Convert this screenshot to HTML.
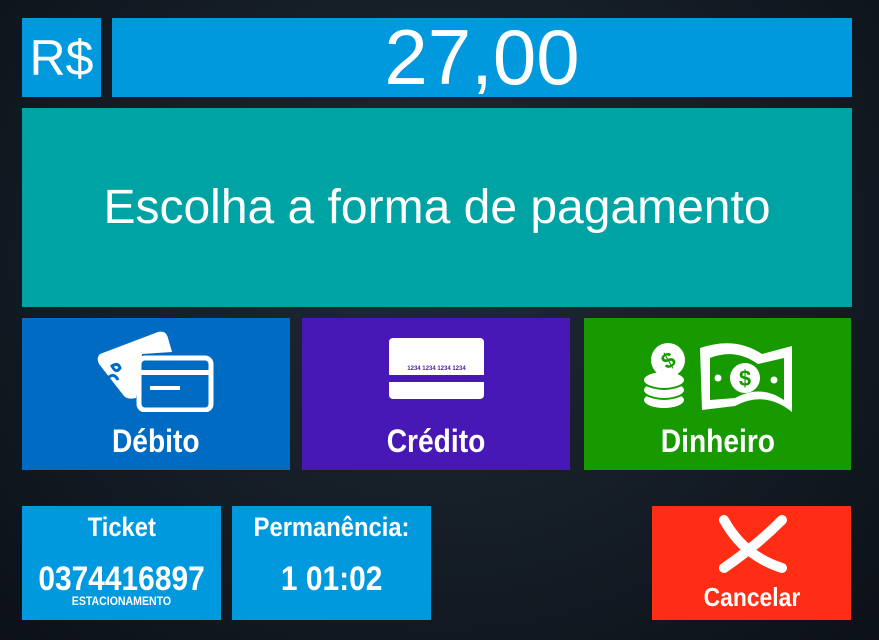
<!DOCTYPE html>
<html><head><meta charset="utf-8"><style>
body{margin:0;width:879px;height:640px;overflow:hidden;background:radial-gradient(ellipse at 50% 40%,#1f2a36 0%,#141b24 60%,#0c1118 100%);font-family:"Liberation Sans",sans-serif;color:#fff;position:relative}
.b{position:absolute;display:flex;align-items:center;justify-content:center}
.n{font-weight:bold}
.c{display:inline-block;transform:scaleX(0.88)}
</style></head><body>
<div class="b" style="left:22px;top:18px;width:79px;height:79px;background:#0099dd;font-size:50px">R$</div>
<div class="b" style="left:112px;top:18px;width:740px;height:79px;background:#0099dd;font-size:78px;line-height:79px">27,00</div>
<div class="b" style="left:22px;top:108px;width:830px;height:199px;background:#00a3a3;font-size:48px">Escolha a forma de pagamento</div>

<div class="b" style="left:22px;top:318px;width:268px;height:152px;background:#006bc2"></div>
<svg style="position:absolute;left:96px;top:326px" width="120" height="86" viewBox="0 0 120 86">
<path d="M4 28 L62 6 Q70 4 72 12 L76 26 L46 28 L40 72 Q32 74 28 70 L3 38 Q0 32 4 28Z" fill="#fff"/>
<path d="M16 40 q6-4 8 2 q-4 6 -8 -2z M12 52 q6 -6 10 2" stroke="#006bc2" stroke-width="3" fill="none"/>
<rect x="43" y="32" width="72" height="52" rx="6" fill="#006bc2" stroke="#fff" stroke-width="5"/>
<rect x="44" y="44" width="70" height="5" fill="#fff"/><rect x="54" y="60" width="30" height="4" fill="#fff"/>
</svg>
<div class="b n" style="left:22px;top:420px;width:268px;height:42px;font-size:32px"><span class="c">Débito</span></div>

<div class="b" style="left:302px;top:318px;width:268px;height:152px;background:#4718b5"></div>
<div style="position:absolute;left:389px;top:338px;width:95px;height:37px;background:#fff;border-radius:4px 4px 0 0;font:bold 6px 'Liberation Sans',sans-serif;color:#4718b5;text-align:center;padding-top:28px;box-sizing:border-box">1234 1234 1234 1234</div>
<div style="position:absolute;left:389px;top:382px;width:95px;height:17px;background:#fff;border-radius:0 0 4px 4px"></div>
<div class="b n" style="left:302px;top:420px;width:268px;height:42px;font-size:32px"><span class="c">Crédito</span></div>

<div class="b" style="left:584px;top:318px;width:267px;height:152px;background:#169a00"></div>
<svg style="position:absolute;left:640px;top:340px" width="156" height="74" viewBox="0 0 156 74">
<g fill="#fff"><ellipse cx="24" cy="60" rx="20" ry="8"/><ellipse cx="24" cy="50" rx="20" ry="8"/><ellipse cx="24" cy="40" rx="20" ry="8"/></g>
<g fill="none" stroke="#169a00" stroke-width="2"><path d="M4 44 q20 10 40 0 M4 54 q20 10 40 0"/></g>
<circle cx="28" cy="20" r="17" fill="#fff"/><text x="28" y="28" fill="#169a00" font-family="Liberation Sans" font-weight="bold" font-size="22" text-anchor="middle" transform="rotate(-30 28 20)">$</text>
<path d="M60 8 Q95 -4 122 14 L152 6 L152 72 Q125 50 95 66 L62 70Z" fill="#fff"/>
<path d="M70 18 Q95 8 118 24 L144 18 L144 60 Q120 44 95 58 L70 60Z" fill="#169a00"/>
<circle cx="105" cy="38" r="15" fill="#fff"/><text x="105" y="46" fill="#169a00" font-family="Liberation Sans" font-weight="bold" font-size="22" text-anchor="middle">$</text>
<circle cx="78" cy="38" r="3.5" fill="#fff"/><circle cx="134" cy="40" r="3.5" fill="#fff"/>
</svg>
<div class="b n" style="left:584px;top:420px;width:267px;height:42px;font-size:32px"><span class="c">Dinheiro</span></div>

<div style="position:absolute;left:22px;top:506px;width:199px;height:114px;background:#0099dd;text-align:center" class="n">
<div style="font-size:27px;margin-top:6px"><span class="c">Ticket</span></div>
<div style="font-size:34px;margin-top:18px;white-space:nowrap;line-height:36px"><span class="c">0374416897</span></div>
<div style="font-size:12px;margin-top:-3px"><span class="c">ESTACIONAMENTO</span></div></div>
<div style="position:absolute;left:232px;top:506px;width:199px;height:114px;background:#0099dd;text-align:center;white-space:nowrap" class="n">
<div style="font-size:27px;margin-top:6px"><span class="c">Permanência:</span></div>
<div style="font-size:34px;margin-top:18px;line-height:36px"><span class="c">1 01:02</span></div></div>
<div style="position:absolute;left:652px;top:506px;width:199px;height:114px;background:#ff2d14;text-align:center" class="n">
<svg style="position:absolute;left:62px;top:6px" width="80" height="66"><path d="M10 8 Q30 44 68 56 M68 8 Q42 34 10 56" stroke="#fff" stroke-width="10" stroke-linecap="round" fill="none"/></svg>
<div style="position:absolute;left:0;right:0;top:76px;font-size:26px"><span class="c">Cancelar</span></div></div>
</body></html>
